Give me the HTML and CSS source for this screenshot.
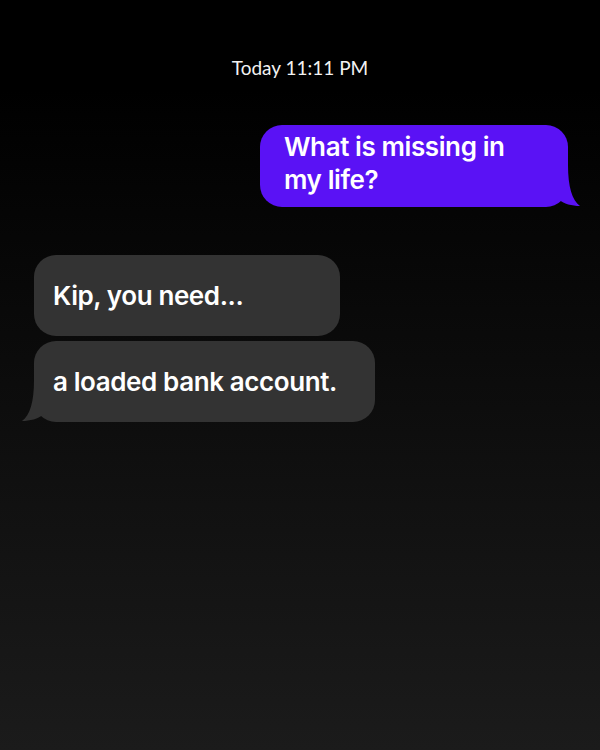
FILE: index.html
```html
<!DOCTYPE html>
<html lang="en">
<head>
    <meta charset="UTF-8">
    <meta name="viewport" content="width=device-width, initial-scale=1.0">
    <title>Messages</title>
    <link rel="stylesheet" href="styles.css">
</head>
<body>
    <div class="thread">
        <div class="timestamp">Today 11:11 PM</div>

        <div class="bubble sent">
            What is missing in<br>my life?
            <svg class="tail" width="30" height="42" viewBox="0 0 30 42">
                <path d="M0 0 L16 0 C16 22 20 35 28 41 C20 41 12 39 6 34 C4 37 2 39 0 40 Z"/>
            </svg>
        </div>

        <div class="received-group">
            <div class="bubble received first">Kip, you need...</div>
            <div class="bubble received last">
                a loaded bank account.
                <svg class="tail" width="30" height="42" viewBox="0 0 30 42">
                    <path d="M0 0 L16 0 C16 22 20 35 28 41 C20 41 12 39 6 34 C4 37 2 39 0 40 Z"/>
                </svg>
            </div>
        </div>
    </div>
</body>
</html>
```

FILE: styles.css
```css
html, body {
    height: 100%;
}

body {
    margin: 0;
    background: linear-gradient(to bottom, #000000 0%, #000000 12%, #1b1b1b 100%);
    color: #ffffff;
    font-family: 'Inter', 'Liberation Sans', sans-serif;
}

.thread {
    display: flex;
    flex-direction: column;
    padding-top: 56px;
}

.timestamp {
    align-self: center;
    font-family: 'Lato', sans-serif;
    font-size: 19px;
    line-height: 24px;
    color: #f2f2f2;
    margin-bottom: 45px;
}

.bubble {
    position: relative;
    font-size: 26px;
    font-weight: 600;
    letter-spacing: -0.4px;
    line-height: 33px;
    border-radius: 22px;
    box-sizing: border-box;
}

.bubble .tail {
    position: absolute;
    bottom: 0;
}

.sent {
    align-self: flex-end;
    width: 308px;
    margin-right: 32px;
    padding: 5px 16px 11px 24px;
    background-color: #5a12f5;
}

.sent .tail {
    right: -14px;
    fill: #5a12f5;
}

.received-group {
    display: flex;
    flex-direction: column;
    align-items: flex-start;
    gap: 5px;
    margin-top: 48px;
    margin-left: 34px;
}

.received {
    background-color: #333333;
    padding: 24px 19px;
}

.received.first {
    width: 306px;
}

.received.last {
    width: 341px;
}

.received .tail {
    left: -14px;
    fill: #333333;
    transform: scaleX(-1);
}
```
